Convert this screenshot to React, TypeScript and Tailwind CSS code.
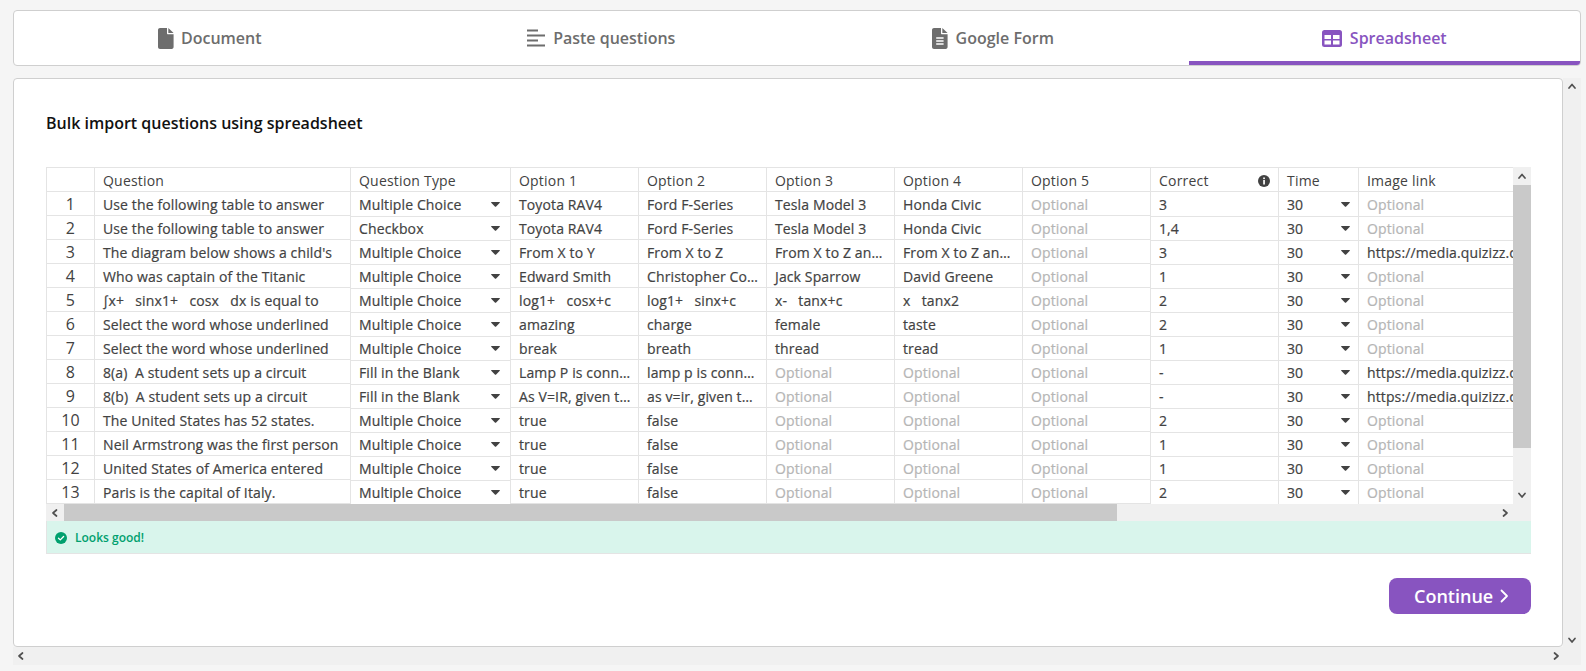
import React from "react";

type Row = { q: string; t: string; o: string[]; c: string; img?: boolean };

const TF = ["true", "false"];
const rows: Row[] = [
  { q: "Use the following table to answer", t: "Multiple Choice", o: ["Toyota RAV4", "Ford F-Series", "Tesla Model 3", "Honda Civic"], c: "3" },
  { q: "Use the following table to answer", t: "Checkbox", o: ["Toyota RAV4", "Ford F-Series", "Tesla Model 3", "Honda Civic"], c: "1,4" },
  { q: "The diagram below shows a child's", t: "Multiple Choice", o: ["From X to Y", "From X to Z", "From X to Z and Y", "From X to Z and Y"], c: "3", img: true },
  { q: "Who was captain of the Titanic", t: "Multiple Choice", o: ["Edward Smith", "Christopher Columbus", "Jack Sparrow", "David Greene"], c: "1" },
  { q: "∫x+   sinx1+   cosx   dx is equal to", t: "Multiple Choice", o: ["log1+   cosx+c", "log1+   sinx+c", "x-   tanx+c", "x   tanx2"], c: "2" },
  { q: "Select the word whose underlined", t: "Multiple Choice", o: ["amazing", "charge", "female", "taste"], c: "2" },
  { q: "Select the word whose underlined", t: "Multiple Choice", o: ["break", "breath", "thread", "tread"], c: "1" },
  { q: "8(a)  A student sets up a circuit", t: "Fill in the Blank", o: ["Lamp P is connected", "lamp p is connected"], c: "-", img: true },
  { q: "8(b)  A student sets up a circuit", t: "Fill in the Blank", o: ["As V=IR, given that", "as v=ir, given that"], c: "-", img: true },
  { q: "The United States has 52 states.", t: "Multiple Choice", o: TF, c: "2" },
  { q: "Neil Armstrong was the first person", t: "Multiple Choice", o: TF, c: "1" },
  { q: "United States of America entered", t: "Multiple Choice", o: TF, c: "1" },
  { q: "Paris is the capital of Italy.", t: "Multiple Choice", o: TF, c: "2" },
];

const Caret = () => (
  <svg width="9" height="5" viewBox="0 0 9 5" className="shrink-0">
    <path d="M0.6 0h7.8c.5 0 .7.5.4.8L4.9 4.7c-.2.2-.6.2-.8 0L.2.8C-.1.5.1 0 .6 0z" fill="#424242" />
  </svg>
);

const Chev = ({ dir, size = 10 }: { dir: "up" | "down" | "left" | "right"; size?: number }) => {
  const d = { up: "M2 7l3-3.5L8 7", down: "M2 3.5L5 7l3-3.5", left: "M6.5 2L3 5l3.5 3", right: "M3.5 2L7 5 3.5 8" }[dir];
  return (
    <svg width={size} height={size} viewBox="0 0 10 10" fill="none" className="shrink-0">
      <path d={d} stroke="#505050" strokeWidth="1.7" strokeLinecap="round" strokeLinejoin="round" />
    </svg>
  );
};

const HeadCell = ({ w, children }: { w: string; children?: React.ReactNode }) => (
  <div className={`${w} shrink-0 h-[24px] border-l border-b border-[#e4e4e4] pl-[8px] pr-2 pt-[2px] flex items-center justify-between leading-[21px] font-medium tracking-[0.2px] [-webkit-text-stroke:0px]`}>{children}</div>
);

/* Most columns carry their rule on the row's last pixel, a few on the next row's first pixel. */
const short = "border-l border-b border-[#e4e4e4] leading-[25px]";
const tallFirst = "border-l border-[#e4e4e4] leading-[25px]";
const tallRest = "border-l border-t border-[#e4e4e4] leading-[23px]";

const Opt = ({ v, cls }: { v?: string; cls: string }) => (
  <div className={`w-[128px] shrink-0 h-[24px] pl-[8px] pr-[6px] truncate whitespace-pre ${cls} ${v ? "" : "text-[#b5b5b5]"}`}>{v ?? "Optional"}</div>
);

const FileShape = ({ lines }: { lines?: boolean }) => (
  <svg width="16" height="21" viewBox="0 0 16 21" className="shrink-0">
    <path d="M2 0h7v5.2c0 .6.4 1 1 1h5.6V19c0 1.1-.9 2-2 2H2c-1.100 0-2-.9-2-2V2C0 .9.9 0 2 0z" fill="#6d6d6d" />
    <path d="M10.300 0l5.300 5H10.300z" fill="#6d6d6d" />
    {lines && <path d="M4.200 10h7.400M4.200 13h7.400M4.200 16h7.400" stroke="#fff" strokeWidth="1.300" />}
  </svg>
);

const Tab = ({ icon, label, active, gap = "gap-[8px]" }: { icon: React.ReactNode; label: string; active?: boolean; gap?: string }) => (
  <div className={`flex-1 h-full flex items-center justify-center ${gap} text-[16px] font-semibold ${active ? "text-[#8854c0] border-b-4 border-[#8854c0] pt-[4px]" : "text-[#6d6d6d]"}`}>
    {icon}
    <span>{label}</span>
  </div>
);

export default function App() {
  return (
    <div className="w-[1586px] h-[671px] overflow-hidden bg-[#f5f5f5] pt-[10px] font-['Open_Sans',sans-serif] text-[#424242]">
      <div className="ml-[13px] w-[1568px] h-[56px] bg-white border border-[#cfcfcf] rounded-[4px] flex overflow-hidden">
        <Tab label="Document" gap="gap-[7px]" icon={<FileShape />} />
        <Tab
          label="Paste questions"
          icon={
            <svg width="18" height="18" viewBox="0 0 18 18" className="shrink-0" fill="#6d6d6d">
              <rect x="0" y="0.500" width="11" height="2" />
              <rect x="0" y="5.500" width="18" height="2" />
              <rect x="0" y="10.500" width="11" height="2" />
              <rect x="0" y="15.500" width="18" height="2" />
            </svg>
          }
        />
        <Tab label="Google Form" icon={<FileShape lines />} />
        <Tab
          active
          label="Spreadsheet"
          icon={
            <svg width="20" height="17" viewBox="0 0 20 17" className="shrink-0">
              <rect width="20" height="17" rx="2.500" fill="#8854c0" />
              <rect x="2.500" y="5" width="6.500" height="4" fill="#fff" />
              <rect x="11" y="5" width="6.500" height="4" fill="#fff" />
              <rect x="2.500" y="10.500" width="6.500" height="4" fill="#fff" />
              <rect x="11" y="10.500" width="6.500" height="4" fill="#fff" />
            </svg>
          }
        />
      </div>

      <div className="ml-[13px] mt-[12px] flex">
        <div className="w-[1550px]">
          <div className="h-[569px] bg-white border border-[#cfcfcf] rounded-[4px] pl-[32px] pt-[32px]">
            <div className="text-[16px] leading-[24px] font-semibold text-[#111111] mb-[32px]">Bulk import questions using spreadsheet</div>
            <div className="w-[1485px]">
              <div className="flex h-[337px]">
                <div className="w-[1467px] overflow-hidden border-t border-[#e4e4e4] text-[14px] font-medium tracking-[0.12px] [-webkit-text-stroke:0.2px]">
                  <div className="flex w-[1700px]">
                    <HeadCell w="w-[48px]" />
                    <HeadCell w="w-[256px]">Question</HeadCell>
                    <HeadCell w="w-[160px]">Question Type</HeadCell>
                    <HeadCell w="w-[128px]">Option 1</HeadCell>
                    <HeadCell w="w-[128px]">Option 2</HeadCell>
                    <HeadCell w="w-[128px]">Option 3</HeadCell>
                    <HeadCell w="w-[128px]">Option 4</HeadCell>
                    <HeadCell w="w-[128px]">Option 5</HeadCell>
                    <HeadCell w="w-[128px]">
                      <span>Correct</span>
                      <svg width="12" height="12" viewBox="0 0 12 12">
                        <circle cx="6" cy="6" r="6" fill="#424242" />
                        <rect x="5.200" y="5" width="1.700" height="4.500" fill="#fff" />
                        <rect x="5.200" y="2.500" width="1.700" height="1.600" fill="#fff" />
                      </svg>
                    </HeadCell>
                    <HeadCell w="w-[80px]">Time</HeadCell>
                    <HeadCell w="w-[256px]">Image link</HeadCell>
                  </div>
                  {rows.map((r, i) => {
                    const tall = i === 0 ? tallFirst : tallRest;
                    const opts = [0, 1, 2, 3, 4].map((k) => r.o[k]);
                    return (
                      <div key={i} className="flex w-[1700px] h-[24px]">
                        <div className={`w-[48px] shrink-0 h-[24px] text-center text-[16px] font-normal [-webkit-text-stroke:0px] ${short}`}>{i + 1}</div>
                        <div className={`w-[256px] shrink-0 h-[24px] pl-[8px] whitespace-pre overflow-hidden ${short}`}>{r.q}</div>
                        <div className={`w-[160px] shrink-0 h-[24px] pl-[8px] pr-[10px] flex items-center justify-between ${tall}`}>
                          <span>{r.t}</span>
                          <Caret />
                        </div>
                        {opts.map((v, k) => (
                          <Opt key={k} v={v} cls={short} />
                        ))}
                        <div className={`w-[128px] shrink-0 h-[24px] pl-[8px] ${tall}`}>{r.c}</div>
                        <div className={`w-[80px] shrink-0 h-[24px] pl-[8px] pr-[8px] flex items-center justify-between ${tall}`}>
                          <span>30</span>
                          <Caret />
                        </div>
                        <div className={`w-[256px] shrink-0 h-[24px] pl-[8px] whitespace-nowrap overflow-hidden ${tall} ${r.img ? "" : "text-[#b5b5b5]"}`}>
                          {r.img ? "https://media.quizizz.com/resource" : "Optional"}
                        </div>
                      </div>
                    );
                  })}
                </div>
                <div className="w-[18px] h-[337px] bg-[#f0f0f0] flex flex-col items-center">
                  <div className="h-[18px] flex items-center justify-center">
                    <Chev dir="up" />
                  </div>
                  <div className="w-full h-[263px] bg-[#c9c9c9]" />
                  <div className="flex-1 flex items-end justify-center pb-[4px]">
                    <Chev dir="down" />
                  </div>
                </div>
              </div>
              <div className="flex h-[17px] bg-[#f0f0f0] items-center">
                <div className="w-[18px] flex justify-center">
                  <Chev dir="left" />
                </div>
                <div className="w-[1053px] h-full bg-[#c9c9c9]" />
                <div className="flex-1 flex justify-end pr-[21px]">
                  <Chev dir="right" />
                </div>
              </div>
              <div className="h-[33px] bg-[#d9f5ec] border-l border-b border-[#e4e4e4] pl-[8px] pt-[1px] flex items-center gap-[8px] text-[12px] font-semibold text-[#00a06e]">
                <svg width="12" height="12" viewBox="0 0 12 12" className="shrink-0">
                  <circle cx="6" cy="6" r="6" fill="#00a06e" />
                  <path d="M3.500 6.200l1.800 1.700L8.600 4.500" fill="none" stroke="#fff" strokeWidth="1.300" strokeLinecap="round" strokeLinejoin="round" />
                </svg>
                <span>Looks good!</span>
              </div>
              <div className="flex justify-end mt-[24px]">
                <div className="w-[142px] h-[36px] rounded-[8px] bg-[#8854c0] text-white text-[18px] font-semibold flex items-center justify-start gap-[7px] pl-[25px]">
                  <span>Continue</span>
                  <svg width="9" height="14" viewBox="0 0 9 14" fill="none" className="shrink-0">
                    <path d="M1.500 1.500L7 7l-5.500 5.500" stroke="#fff" strokeWidth="1.800" strokeLinecap="round" strokeLinejoin="round" />
                  </svg>
                </div>
              </div>
            </div>
          </div>
          <div className="h-[18px] bg-[#f0f0f0] flex items-center justify-between pl-[3px] pr-[2px]">
            <Chev dir="left" />
            <Chev dir="right" />
          </div>
        </div>
        <div className="w-[18px] h-[587px] bg-[#f0f0f0] flex flex-col items-center justify-between pt-[3px] pb-[20px]">
          <Chev dir="up" />
          <Chev dir="down" />
        </div>
      </div>
    </div>
  );
}
